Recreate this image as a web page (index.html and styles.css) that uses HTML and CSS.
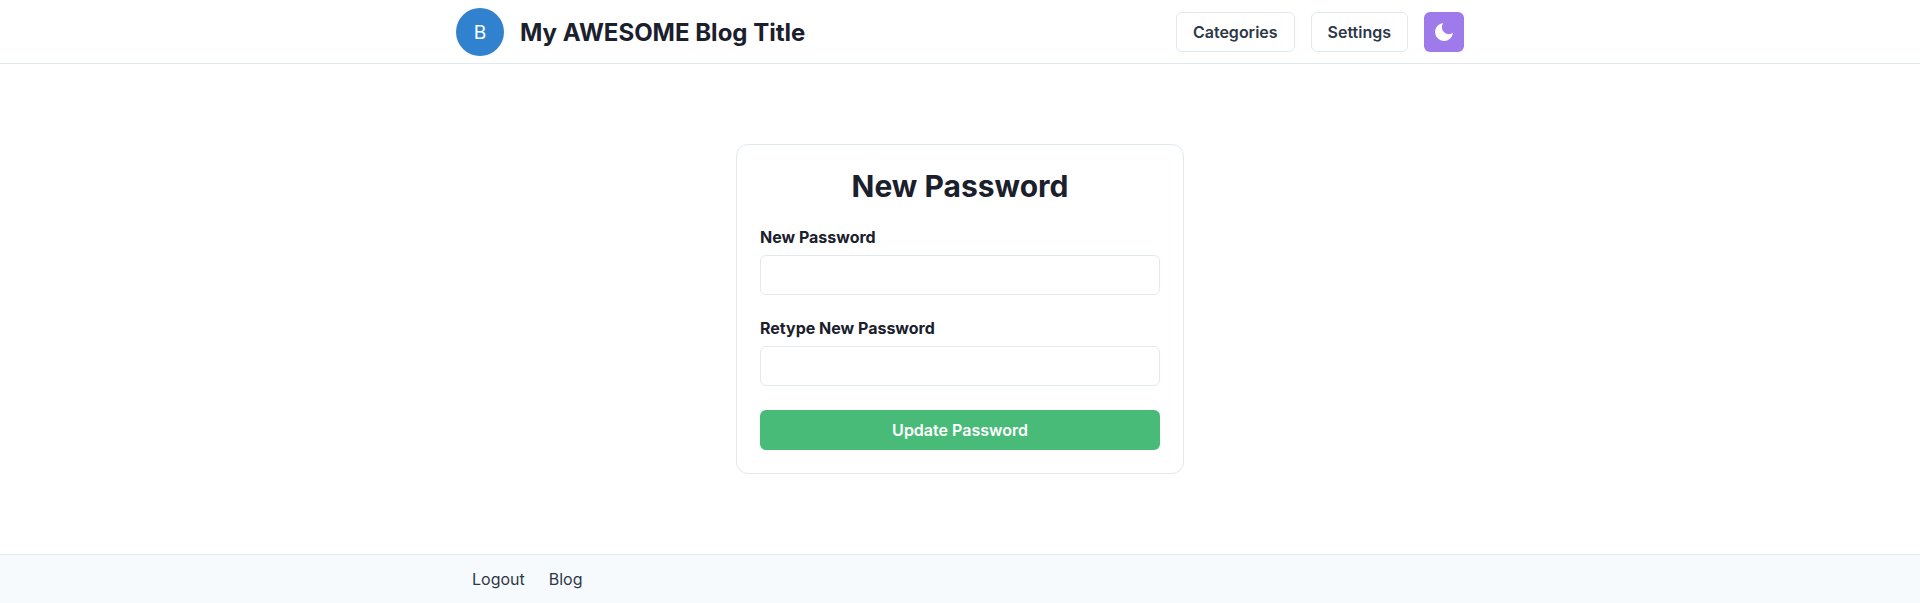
FILE: index.html
```html
<!DOCTYPE html>
<html lang="en">
<head>
<meta charset="utf-8">
<title>New Password</title>
<link rel="stylesheet" href="styles.css">
</head>
<body>
<header class="header">
  <div class="container header-inner">
    <div class="avatar">B</div>
    <h2 class="site-title">My AWESOME Blog Title</h2>
    <nav class="nav">
      <button class="btn btn-outline">Categories</button>
      <button class="btn btn-outline">Settings</button>
      <button class="btn btn-theme" aria-label="Toggle theme">
        <svg viewBox="0 0 24 24" width="24" height="24"><path fill="currentColor" d="M21 12.79A9 9 0 1 1 11.21 3 7 7 0 0 0 21 12.79z"/></svg>
      </button>
    </nav>
  </div>
</header>
<main class="main">
  <form class="card">
    <h1 class="card-title">New Password</h1>
    <div class="fields">
      <div class="field">
        <label class="label" for="pw">New Password</label>
        <input class="input" id="pw" type="password">
      </div>
      <div class="field">
        <label class="label" for="pw2">Retype New Password</label>
        <input class="input" id="pw2" type="password">
      </div>
    </div>
    <button class="btn btn-submit" type="button">Update Password</button>
  </form>
</main>
<footer class="footer">
  <div class="container footer-inner">
    <a class="footer-link">Logout</a>
    <a class="footer-link">Blog</a>
  </div>
</footer>
</body>
</html>
```
FILE: styles.css
```css
* { box-sizing: border-box; margin: 0; }
body {
  min-height: 603px;
  display: flex;
  flex-direction: column;
  font: 16px/24px Inter, sans-serif;
  color: #1a202c;
  background: #fff;
}
.container { width: 1008px; margin: 0 auto; display: flex; align-items: center; }
.header { height: 64px; border-bottom: 1px solid #e2e8f0; }
.header-inner { height: 64px; gap: 16px; }
.avatar {
  width: 48px; height: 48px;
  border-radius: 50%;
  background: #3182ce;
  color: #fff;
  display: flex; align-items: center; justify-content: center;
  font-size: 19.2px;
}
.site-title { font-size: 24px; line-height: 32px; font-weight: 700; padding-top: 2px; }
.nav { margin-left: auto; display: flex; gap: 16px; }
.btn {
  height: 40px;
  padding: 0 15px;
  border: 0;
  border-radius: 6px;
  font: 600 16px/19px Inter, sans-serif;
}
.btn-outline { background: #fff; border: 1px solid #e2e8f0; color: #2d3748; padding: 0 16px; }
.btn-theme {
  width: 40px; padding: 0;
  background: #9f7aea; color: #fff;
  display: flex; align-items: center; justify-content: center;
}
.main { flex: 1; display: flex; justify-content: center; align-items: flex-start; padding-top: 80px; }
.card {
  width: 448px;
  padding: 23px;
  border: 1px solid #e2e8f0;
  border-radius: 12px;
  display: flex;
  flex-direction: column;
}
.card-title { font-size: 30px; line-height: 36px; font-weight: 700; text-align: center; margin-bottom: 21px; }
.fields { display: flex; flex-direction: column; gap: 21px; margin-bottom: 24px; }
.field { display: flex; flex-direction: column; gap: 6px; }
.label { font-weight: 700; }
.input { height: 40px; border: 1px solid #e2e8f0; border-radius: 6px; background: #fff; padding: 0 16px; }
.btn-submit { background: #48bb78; color: #fff; }
.footer { height: 50px; margin-bottom: -1px; border-top: 1px solid #e2e8f0; background: #f7fafc; }
.footer-inner { height: 48px; padding-left: 16px; gap: 24px; }
.footer-link { color: #2d3748; }
```
